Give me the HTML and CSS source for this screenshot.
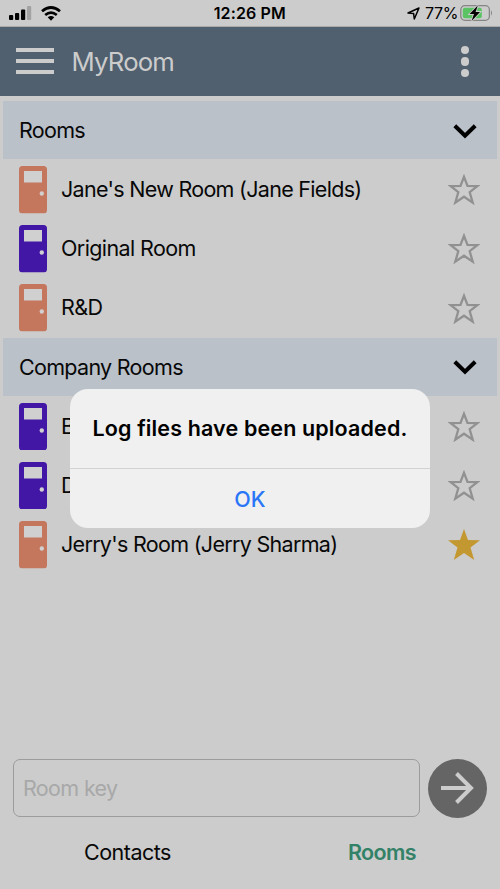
FILE: index.html
```html
<!DOCTYPE html>
<html lang="en">
<head>
<meta charset="utf-8">
<title>MyRoom</title>
<link rel="stylesheet" href="styles.css">
</head>
<body>
<svg class="defs" width="0" height="0" aria-hidden="true">
  <symbol id="door" viewBox="0 0 28 47.5">
    <rect width="28" height="47.5" rx="3.5" fill="currentColor"/>
    <rect x="5" y="5" width="18" height="11.5" fill="#d0d0d0"/>
    <circle cx="22.8" cy="27.5" r="2.2" fill="#d0d0d0"/>
  </symbol>
  <symbol id="star" viewBox="0 0 32 31">
    <path d="M16 2.800 19.500 11.900 29.300 12.100 21.700 18.200 24.700 28.600 16 22.700 7.300 28.600 10.300 18.200 2.700 12.100 12.500 11.900Z" fill="none" stroke="#919191" stroke-width="2.3"/>
  </symbol>
  <symbol id="star-full" viewBox="0 0 32 31">
    <path d="M16 0 20 11 32 11.2 22.5 18.6 26.2 31 16 24 5.8 31 9.5 18.6 0 11.2 12 11Z" fill="#c39831"/>
  </symbol>
  <symbol id="chevron" viewBox="0 0 24 15">
    <path d="M1.8 1.8 12 11.8 22.2 1.8" fill="none" stroke="#000" stroke-width="4"/>
  </symbol>
</svg>
<div class="screen">
  <div class="status">
    <div class="status-left">
      <svg width="23" height="15" viewBox="0 0 23 15"><rect x="0" y="9" width="4.2" height="5" rx="1"/><rect x="6" y="7" width="4.2" height="7" rx="1"/><rect x="12" y="3.5" width="4.2" height="10.500" rx="1"/><rect x="18" y="0" width="4.2" height="14" rx="1" fill="#a2a2a2"/></svg>
      <svg class="wifi" width="20" height="15" viewBox="0 0 20 15"><g fill="none" stroke="#000" stroke-width="2.7"><path d="M1 5.300Q10 -2.300 19 5.300"/><path d="M4.200 9Q10 4.200 15.800 9"/></g><path d="M6.700 11.200Q10 8.600 13.300 11.200L10 14.700Z"/></svg>
    </div>
    <span class="time">12:26 PM</span>
    <div class="status-right">
      <svg width="13" height="13" viewBox="0 0 13 13"><path d="M1 6 12 1 7.300 12 6.600 6.400Z" fill="none" stroke="#000" stroke-width="1.500" stroke-linejoin="round"/></svg>
      <span class="percent">77%</span>
      <svg class="battery" width="33" height="18" viewBox="0 0 33 18"><rect x=".8" y="1.700" width="28.600" height="14.600" rx="4" fill="none" stroke="#858585" stroke-width="1.300"/><rect x="2.800" y="3.700" width="19" height="10.600" rx="2" fill="#5ac363"/><path d="M31 6.300q2 2.700 0 5.400Z" fill="#858585"/><path d="M17.800 1.500 9.600 10H14L11.600 17 20 8H15.600Z" stroke="#ccc" stroke-width="1.800" paint-order="stroke"/></svg>
    </div>
  </div>
  <header class="appbar">
    <div class="menu"><i></i><i></i><i></i></div>
    <h1>MyRoom</h1>
    <div class="more"><i></i><i></i><i></i></div>
  </header>
  <main class="list">
    <div class="section"><span>Rooms</span><svg class="chevron"><use href="#chevron"/></svg></div>
    <div class="room"><svg class="door coral"><use href="#door"/></svg><span>Jane's New Room (Jane Fields)</span><svg class="star"><use href="#star"/></svg></div>
    <div class="room"><svg class="door violet"><use href="#door"/></svg><span class="short">Original Room</span><svg class="star"><use href="#star"/></svg></div>
    <div class="room"><svg class="door coral"><use href="#door"/></svg><span class="short">R&amp;D</span><svg class="star"><use href="#star"/></svg></div>
    <div class="section"><span>Company Rooms</span><svg class="chevron"><use href="#chevron"/></svg></div>
    <div class="room"><svg class="door violet"><use href="#door"/></svg><span>B</span><svg class="star"><use href="#star"/></svg></div>
    <div class="room"><svg class="door violet"><use href="#door"/></svg><span>D</span><svg class="star"><use href="#star"/></svg></div>
    <div class="room"><svg class="door coral"><use href="#door"/></svg><span>Jerry's Room (Jerry Sharma)</span><svg class="star"><use href="#star-full"/></svg></div>
  </main>
  <div class="entry">
    <div class="field"><span>Room key</span></div>
    <div class="go"><svg width="33" height="32" viewBox="0 0 33 32"><path d="M0 16H30M15.500 1.500 30 16 15.500 30.500" fill="none" stroke="#ccc" stroke-width="4"/></svg></div>
  </div>
  <nav class="tabs"><span class="tab contacts">Contacts</span><span class="tab active">Rooms</span></nav>
  <div class="alert">
    <p class="message">Log files have been uploaded.</p>
    <div class="ok">OK</div>
  </div>
</div>
</body>
</html>
```

FILE: styles.css
```css
* { box-sizing: border-box; }
body { margin: 0; background: #ccc; color: #080808; font-family: Inter, "Liberation Sans", sans-serif; font-size: 21.5px; }
svg { display: block; flex: none; }
.defs { position: absolute; }
.screen { position: relative; height: 889px; overflow: hidden; display: flex; flex-direction: column; }
.status { height: 27px; flex: none; display: grid; grid-template-columns: 1fr auto 1fr; align-items: center; padding: 0 7px 0 8.5px; border-bottom: 1px solid #aaa; font-size: 16px; color: #000; }
.status-left, .status-right { display: flex; align-items: center; }
.wifi { margin-left: 9px; }
.status-right { justify-content: flex-end; }
.time { font-weight: 600; letter-spacing: .12px; margin-left: -2px; }
.percent { margin: 0 2px 0 5px; letter-spacing: -.4px; }
.appbar { height: 69px; flex: none; display: flex; align-items: center; background: #50606f; color: #ccc; padding: 2px 31px 0 16px; }
.menu { width: 37.500px; display: flex; flex-direction: column; gap: 7px; margin-top: -4px; }
.menu i { height: 4px; background: #ccc; }
.appbar h1 { margin: -1px auto 0 18px; font-size: 25.700px; font-weight: 400; letter-spacing: -.8px; line-height: 32px; }
.more { display: flex; flex-direction: column; gap: 3.200px; margin-top: -2px; }
.more i { width: 8.300px; height: 8.300px; border-radius: 50%; background: #ccc; }
.list { flex: 1; padding: 5px 3px 0; }
.section, .room { height: 59.200px; display: flex; align-items: center; padding-left: 16px; }
.section { background: #bac1c9; background-clip: padding-box; border-bottom: 1px solid transparent; padding-right: 20px; }
.section span, .room span { white-space: nowrap; letter-spacing: -.7px; }
.room .short { letter-spacing: -.6px; }
.chevron { width: 24px; height: 15px; margin: 2px 0 0 auto; }
.room { padding-right: 17px; }
.room span { margin: -2px 0 0 14px; }
.door { width: 28px; height: 47.500px; }
.coral { color: #c4775d; }
.violet { color: #4317a6; }
.star { width: 32px; height: 31px; margin-left: auto; }
.entry { display: flex; flex: none; height: 60px; padding: 0 13px; gap: 8px; align-items: center; }
.field { flex: 1; height: 58px; margin-top: -1px; border: 1px solid #9c9c9c; border-radius: 7px; color: #a8a8a8; display: flex; align-items: center; padding-left: 9px; letter-spacing: -.65px; }
.go { width: 59px; height: 59px; border-radius: 50%; background: #656565; display: flex; align-items: center; justify-content: center; }
.tabs { flex: none; height: 71px; display: flex; padding: 20px 84px 0; justify-content: space-between; line-height: 28px; }
.contacts { letter-spacing: -.5px; }
.active { color: #338268; font-weight: 600; letter-spacing: -.6px; }
.alert { position: absolute; left: 70px; top: 389px; width: 360px; height: 139px; border-radius: 18px; background: #f0f0f0; color: #000; text-align: center; }
.message { margin: 0; height: 80px; line-height: 79px; border-bottom: 1.500px solid #d2d2d2; font-weight: 600; letter-spacing: .14px; white-space: nowrap; }
.ok { line-height: 60px; color: #2a76f7; font-weight: 500; }
```
